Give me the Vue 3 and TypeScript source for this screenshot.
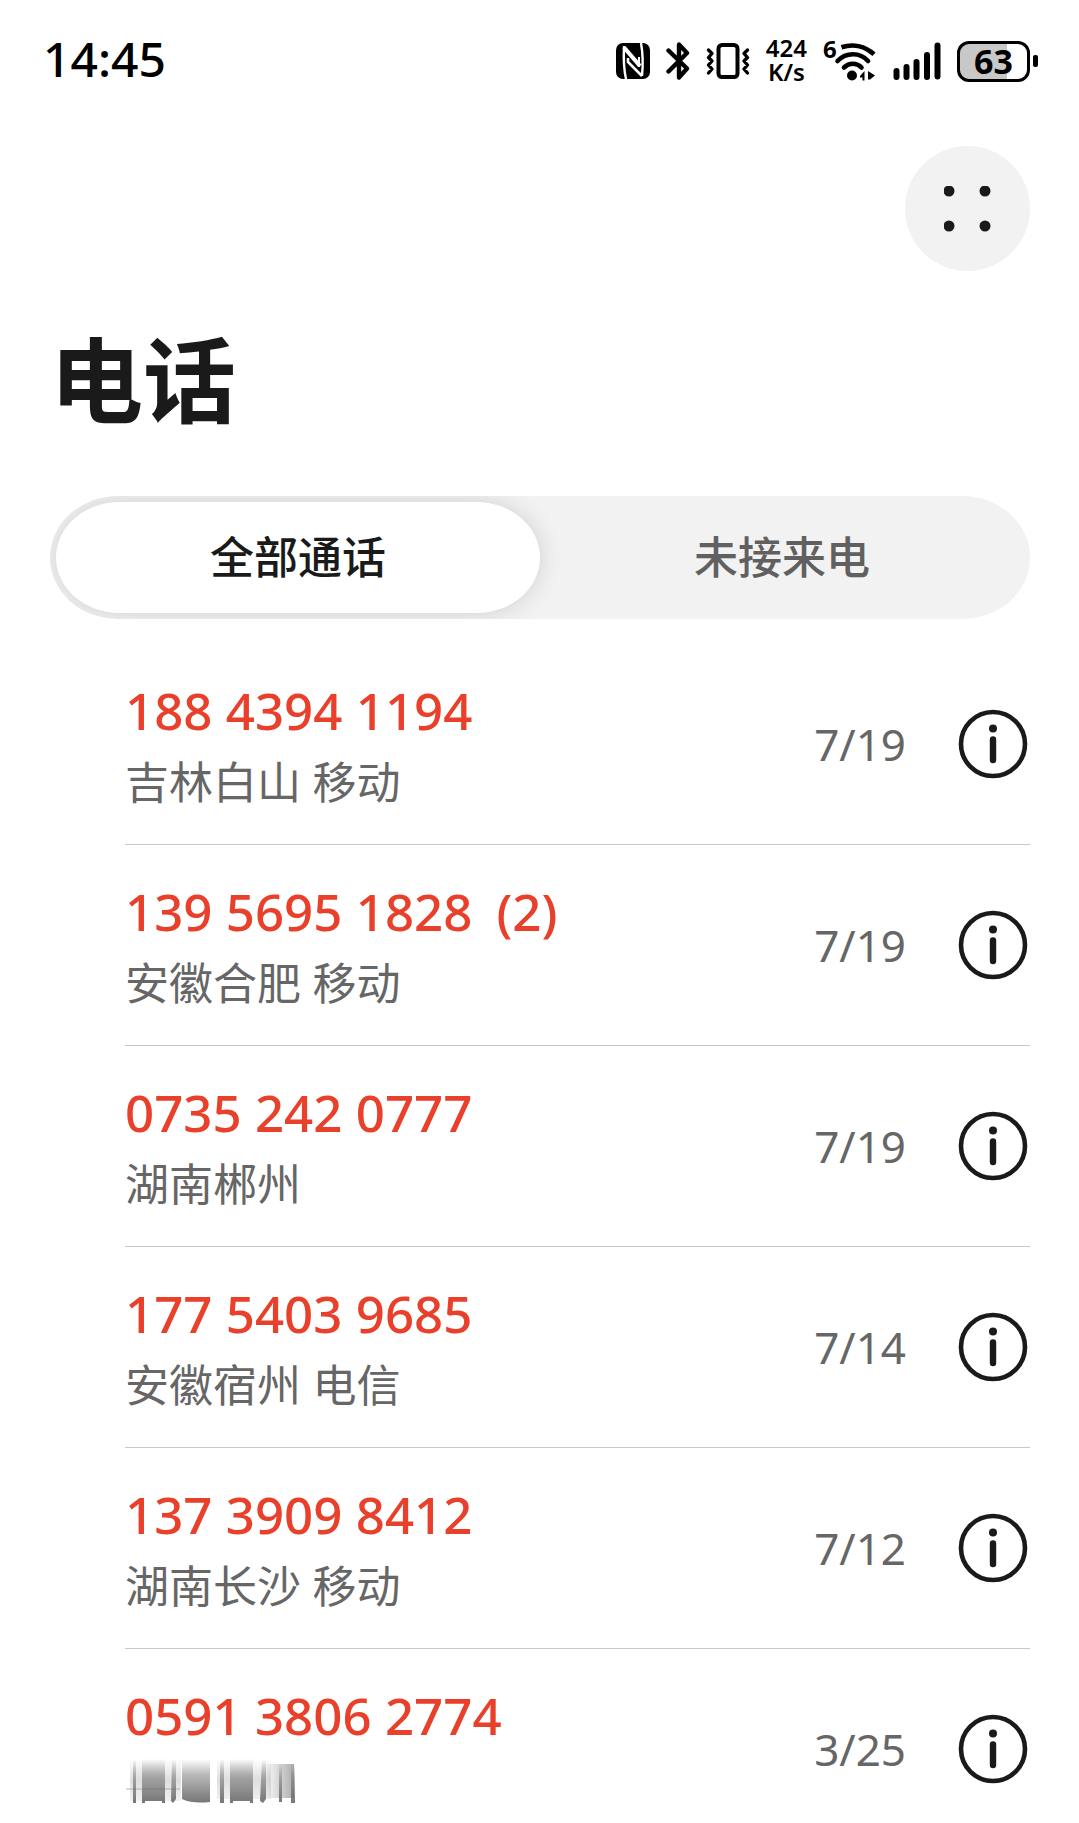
<script setup lang="ts">
import { ref } from 'vue'

interface Call {
  number: string
  count?: number
  place?: string
  date: string
}

const tabs = ['全部通话', '未接来电']
const activeTab = ref(0)

const calls: Call[] = [
  { number: '188 4394 1194', place: '吉林白山 移动', date: '7/19' },
  { number: '139 5695 1828', count: 2, place: '安徽合肥 移动', date: '7/19' },
  { number: '0735 242 0777', place: '湖南郴州', date: '7/19' },
  { number: '177 5403 9685', place: '安徽宿州 电信', date: '7/14' },
  { number: '137 3909 8412', place: '湖南长沙 移动', date: '7/12' },
  { number: '0591 3806 2774', date: '3/25' },
]
</script>

<template>
  <div class="phone">
    <header class="status">
      <span class="time">14:45</span>
      <div class="indicators">
        <svg width="34" height="38" viewBox="0 0 34 38" aria-hidden="true">
          <rect x="0" y="1" width="34" height="36" rx="7" fill="#000" />
          <g fill="none" stroke="#fff">
            <path d="M8 4C7.500 14 7.500 26 10 37" stroke-width="2.400" />
            <path d="M25 1C27 12 27 24 26 34" stroke-width="2.400" />
            <path d="M8 5.500L24 24" stroke-width="4.200" />
            <path d="M12 16V20L26 34" stroke-width="2.600" />
            <path d="M23 15V25" stroke-width="2" />
          </g>
        </svg>
        <svg width="24" height="38" viewBox="0 0 24 38" aria-hidden="true">
          <path d="M2.500 8.500L21 26.500L13 35.500V24M2.500 29.500L21 11L13 2.500V17" fill="none" stroke="#000" stroke-width="4.400" stroke-linecap="round" stroke-linejoin="round" />
        </svg>
        <svg width="44" height="38" viewBox="0 0 44 38" aria-hidden="true">
          <rect x="12.500" y="3" width="19" height="32" rx="3.500" fill="none" stroke="#000" stroke-width="4" />
          <path d="M2.500 8L6 11.500L2.500 15.500L6 19L2.500 23L6 27L2.500 31M41.500 8L38 11.500L41.500 15.500L38 19L41.500 23L38 27L41.500 31" fill="none" stroke="#000" stroke-width="3.400" stroke-linecap="round" stroke-linejoin="round" />
        </svg>
        <span class="speed"><span>424</span><span>K/s</span></span>
        <svg class="wifi" width="54" height="62" viewBox="0 -10 54 62" aria-hidden="true">
          <text x="0" y="18">6</text>
          <g fill="none" stroke="#000" stroke-width="4.600" stroke-linecap="round">
            <path d="M18.500 7.200C30 3.500 42 6 51 14.300" stroke-linecap="butt" />
            <path d="M14.500 21C23 12 37 12 45 21" />
            <path d="M21 27.500C26 22.500 34 22.500 38.500 27.500" />
          </g>
          <circle cx="29" cy="35.500" r="5" />
          <path d="M37 36L41.500 31V40.500H39.500V37.500H37ZM45 31L52 35.500L47 39.500H45Z" />
        </svg>
        <svg width="48" height="38" viewBox="0 0 48 38" aria-hidden="true">
          <path d="M3.500 29V35M13.500 25V35M23.500 20V35M34 13V35M44.500 3.500V34.500" fill="none" stroke="#000" stroke-width="6" stroke-linecap="round" />
        </svg>
        <span class="battery"><span class="level">63</span></span>
      </div>
    </header>

    <div class="toolbar">
      <button class="menu" type="button" aria-label="更多">
        <svg width="48" height="46" viewBox="0 0 48 46" aria-hidden="true">
          <g fill="#1a1a1a">
            <circle cx="5" cy="5" r="5.500" />
            <circle cx="41" cy="5" r="5.500" />
            <circle cx="5" cy="40" r="5.500" />
            <circle cx="41" cy="40" r="5.500" />
          </g>
        </svg>
      </button>
    </div>

    <h1>电话</h1>

    <nav class="tabs">
      <button
        v-for="(tab, i) in tabs"
        :key="tab"
        type="button"
        :class="{ active: i === activeTab }"
        :aria-pressed="i === activeTab"
        @click="activeTab = i"
      >{{ tab }}</button>
    </nav>

    <ul class="calls">
      <li v-for="call in calls" :key="call.number">
        <div class="who">
          <div class="number">
            <span>{{ call.number }}</span>
            <span v-if="call.count">({{ call.count }})</span>
          </div>
          <div v-if="call.place" class="place">{{ call.place }}</div>
          <svg v-else class="smear" width="174" height="52" viewBox="0 0 174 52" aria-hidden="true">
            <defs>
              <linearGradient id="bar" x1="0" y1="0" x2="0" y2="1">
                <stop offset="0" stop-color="#666" stop-opacity="0" />
                <stop offset="0.350" stop-color="#666" stop-opacity="0.450" />
                <stop offset="1" stop-color="#666" stop-opacity="0.900" />
              </linearGradient>
              <linearGradient id="haze" x1="0" y1="0" x2="0" y2="1">
                <stop offset="0" stop-color="#888" stop-opacity="0" />
                <stop offset="0.500" stop-color="#888" stop-opacity="0.280" />
                <stop offset="1" stop-color="#888" stop-opacity="0.120" />
              </linearGradient>
              <linearGradient id="edge" x1="0" y1="0" x2="1" y2="0">
                <stop offset="0" stop-color="#666" stop-opacity="0.050" />
                <stop offset="1" stop-color="#666" stop-opacity="0.900" />
              </linearGradient>
            </defs>
            <path d="M5 4H56V46H5ZM92 4H146V44H92Z" fill="url(#haze)" />
            <path d="M1 34H55" stroke="#999" stroke-opacity="0.350" stroke-width="2" />
            <path d="M8 4H11V48H8ZM17 4H40V48H37V46H20V48H17ZM47 4H51V44L48 48L46 46ZM57 4H85V47C75 48 65 48 57 44ZM95 4H99V48H95ZM105 4H128V48H125V46H108V48H105ZM137 4H141V44L138 48L135 46Z" fill="url(#bar)" />
            <path d="M141 9H169V43H141Z" fill="url(#edge)" opacity="0.600" />
            <path d="M154 9H157V47H154ZM166 9H170V48H166Z" fill="url(#bar)" />
          </svg>
        </div>
        <time>{{ call.date }}</time>
        <button class="info" type="button" :aria-label="call.number">
          <svg width="70" height="70" viewBox="0 0 70 70" aria-hidden="true">
            <circle cx="35" cy="35" r="32" fill="none" stroke="#1a1a1a" stroke-width="4.600" />
            <circle cx="35" cy="19.500" r="4" fill="#1a1a1a" />
            <path d="M35 30.500V51" stroke="#1a1a1a" stroke-width="6.400" stroke-linecap="round" />
          </svg>
        </button>
      </li>
    </ul>
  </div>
</template>

<style>
body {
  background: #fff;
}
</style>

<style scoped>
.phone {
  font-family: "Noto Sans", "Noto Sans CJK SC", sans-serif;
  color: #1a1a1a;
}

button {
  border: 0;
  padding: 0;
  background: none;
  font: inherit;
  color: inherit;
  cursor: pointer;
}

svg {
  display: block;
  flex: none;
}

.status {
  display: flex;
  justify-content: space-between;
  align-items: center;
  height: 122px;
  padding: 0 41px 0 43px;
  color: #000;
}

.time {
  padding-bottom: 4px;
  font-size: 48px;
  line-height: 56px;
  font-weight: 500;
}

.indicators {
  display: flex;
  align-items: center;
  gap: 16px;
}

.speed {
  display: flex;
  flex-direction: column;
  align-items: center;
  padding-bottom: 2px;
  font-size: 24px;
  line-height: 24px;
  font-weight: 600;
}

.wifi text {
  font-size: 24px;
  font-weight: 700;
}

.battery {
  display: flex;
  align-items: center;
  gap: 3px;
}

.battery::after {
  content: "";
  width: 5px;
  height: 12px;
  border-radius: 2px;
  background: #000;
}

.level {
  box-sizing: border-box;
  width: 73px;
  height: 41px;
  border: 3px solid #000;
  border-radius: 12px;
  background: linear-gradient(90deg, #c8c8c8 70%, #fff 70%);
  font-size: 34px;
  line-height: 35px;
  font-weight: 700;
  text-align: center;
}

.toolbar {
  display: flex;
  justify-content: flex-end;
  padding: 24px 49px 0;
}

.menu {
  display: grid;
  place-items: center;
  width: 125px;
  height: 125px;
  border-radius: 50%;
  background: #f2f2f2;
}

h1 {
  margin: 45px 50px 0;
  font-family: "Noto Sans CJK SC", sans-serif;
  font-size: 93px;
  line-height: 120px;
  font-weight: 700;
}

.tabs {
  display: flex;
  margin: 60px 49px 0 50px;
  padding: 6px;
  border-radius: 68px / 61px;
  background: #f2f2f2;
  overflow: hidden;
}

.tabs button {
  flex: 1;
  height: 111px;
  padding-bottom: 6px;
  border-radius: 64px / 56px;
  font-size: 44px;
  font-weight: 500;
  color: #606060;
}

.tabs button.active {
  background: #fff;
  box-shadow: 0 0 24px rgba(0, 0, 0, 0.14);
  color: #1a1a1a;
}

.calls {
  margin: 24px 49px 0 125px;
  padding: 0;
  list-style: none;
}

.calls li {
  display: flex;
  align-items: center;
  padding: 30px 0;
  border-bottom: 1px solid #c8c8c8;
}

.calls li:first-child {
  padding-top: 31px;
}

.calls li:last-child {
  padding-bottom: 0;
  border-bottom: 0;
}

.who {
  flex: 1;
}

.number {
  display: flex;
  gap: 24px;
  font-size: 51px;
  line-height: 72px;
  font-weight: 500;
  color: #e8402a;
}

.place {
  padding-top: 4px;
  font-size: 44px;
  line-height: 64px;
  color: #666;
}

.smear {
  margin: 4px 0 12px;
}

time {
  font-size: 44px;
  line-height: 64px;
  color: #666;
}

.info {
  margin: 0 2px 0 52px;
  border-radius: 50%;
}
</style>
